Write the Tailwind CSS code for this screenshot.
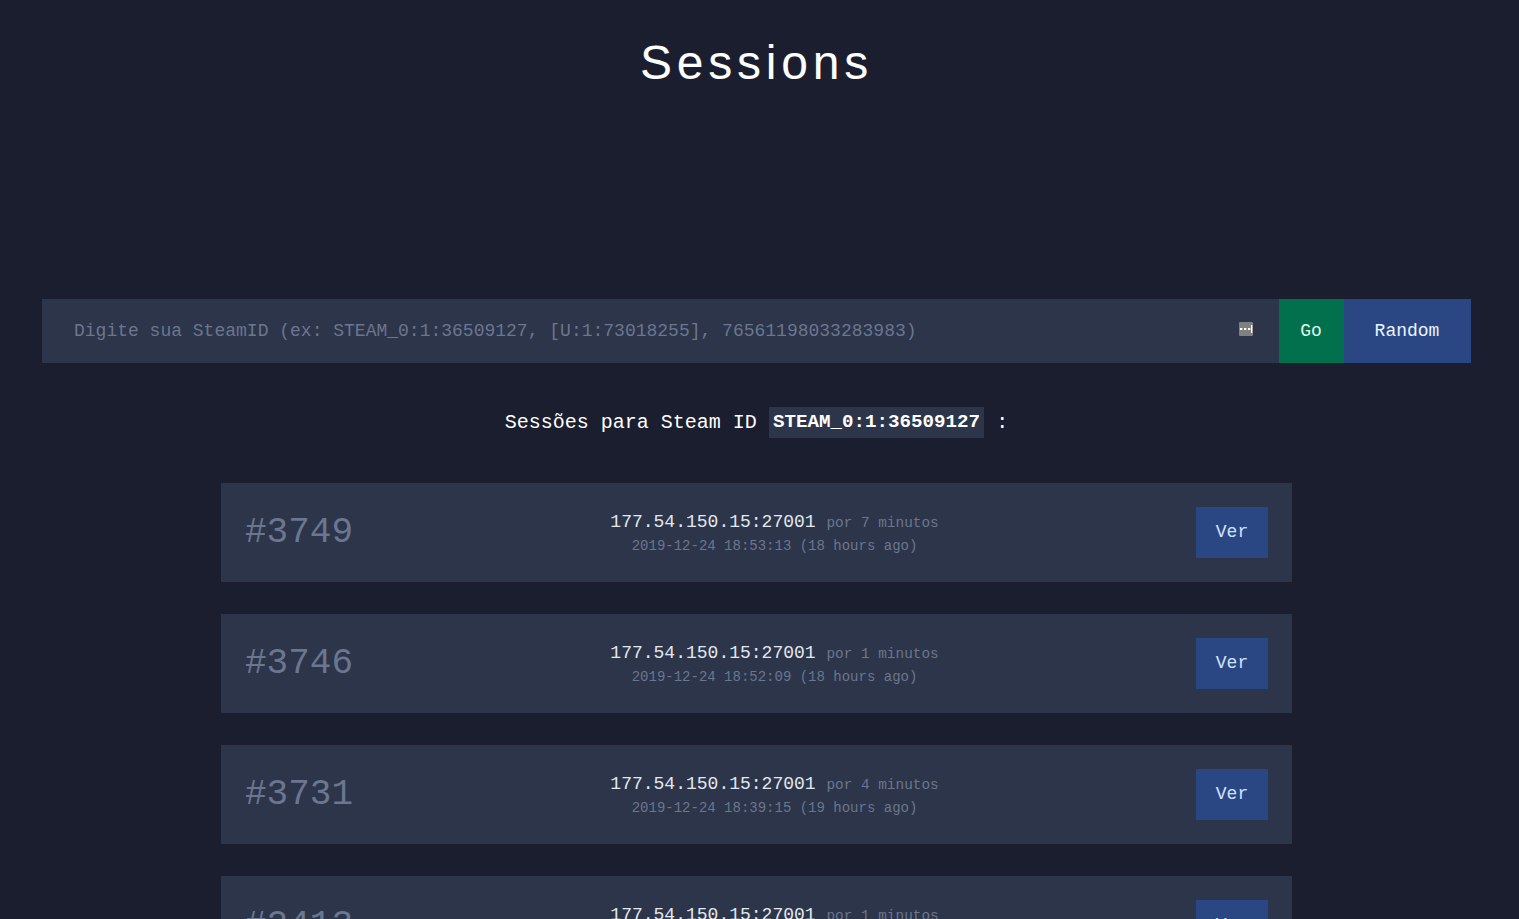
<!DOCTYPE html>
<html lang="pt">
<head>
    <meta charset="UTF-8">
    <meta name="viewport" content="width=device-width, initial-scale=1.0">
    <title>Sessions</title>
    <script src="https://cdn.jsdelivr.net/npm/@tailwindcss/browser@4"></script>
</head>

<body class="bg-[#1a1e2e] text-white font-['Liberation_Mono',monospace] h-screen overflow-hidden">

    <div class="ml-[42px] w-[1429px]">

        <!-- Title -->
        <h1 class="font-['Liberation_Sans',sans-serif] text-[48px] leading-[56px] tracking-[4.8px] text-center pt-[35px] h-[299px]">Sessions</h1>

        <!-- Search -->
        <form class="flex h-16">
            <div class="flex-1 flex items-center justify-between bg-[#2c3549] pl-8 pr-[26px]">
                <span class="text-[18px] text-[#6b7690]">Digite sua SteamID (ex: STEAM_0:1:36509127, [U:1:73018255], 76561198033283983)</span>
                <svg class="w-3.5 h-3.5 -mt-1" viewBox="0 0 14 14">
                    <rect width="14" height="14" rx="1" fill="#808080"/>
                    <rect x="1" y="6" width="2.3" height="2" fill="#fff"/>
                    <rect x="5" y="6" width="2.3" height="2" fill="#fff"/>
                    <rect x="9" y="6" width="2.3" height="2" fill="#fff"/>
                    <rect x="12" y="3" width="1.3" height="8" fill="#fff"/>
                </svg>
            </div>
            <button type="button" class="w-[65px] bg-[#03704d] text-[#def7ec] text-[18px] -indent-px">Go</button>
            <button type="button" class="w-[127px] bg-[#2a4784] text-[#ebf5ff] text-[18px] -indent-px">Random</button>
        </form>

        <!-- Steam ID -->
        <p class="text-center text-[20px] leading-[31px] mt-11 mb-[45px]">Sessões para Steam ID <strong class="bg-[#2c3549] text-[19.2px] px-1 inline-block align-[1px]">STEAM_0:1:36509127</strong> :</p>

        <!-- Sessions -->
        <div class="mx-[179px] flex flex-col gap-8">

            <div class="h-[99px] bg-[#2c3549] px-6 flex items-center justify-between">
                <span class="text-[36px] text-[#6b7690]">#3749</span>
                <div class="text-center">
                    <div class="text-[18px] leading-[26px] text-[#e2e8f0]">177.54.150.15:27001 <span class="text-[14.4px] text-[#6b7690]">por 7 minutos</span></div>
                    <div class="text-[14px] leading-[20px] text-[#6b7690]">2019-12-24 18:53:13 (18 hours ago)</div>
                </div>
                <button type="button" class="w-[72px] h-[51px] bg-[#2a4784] text-[#cfe3ff] text-[18px]">Ver</button>
            </div>

            <div class="h-[99px] bg-[#2c3549] px-6 flex items-center justify-between">
                <span class="text-[36px] text-[#6b7690]">#3746</span>
                <div class="text-center">
                    <div class="text-[18px] leading-[26px] text-[#e2e8f0]">177.54.150.15:27001 <span class="text-[14.4px] text-[#6b7690]">por 1 minutos</span></div>
                    <div class="text-[14px] leading-[20px] text-[#6b7690]">2019-12-24 18:52:09 (18 hours ago)</div>
                </div>
                <button type="button" class="w-[72px] h-[51px] bg-[#2a4784] text-[#cfe3ff] text-[18px]">Ver</button>
            </div>

            <div class="h-[99px] bg-[#2c3549] px-6 flex items-center justify-between">
                <span class="text-[36px] text-[#6b7690]">#3731</span>
                <div class="text-center">
                    <div class="text-[18px] leading-[26px] text-[#e2e8f0]">177.54.150.15:27001 <span class="text-[14.4px] text-[#6b7690]">por 4 minutos</span></div>
                    <div class="text-[14px] leading-[20px] text-[#6b7690]">2019-12-24 18:39:15 (19 hours ago)</div>
                </div>
                <button type="button" class="w-[72px] h-[51px] bg-[#2a4784] text-[#cfe3ff] text-[18px]">Ver</button>
            </div>

            <div class="h-[99px] bg-[#2c3549] px-6 flex items-center justify-between">
                <span class="text-[36px] text-[#6b7690]">#2413</span>
                <div class="text-center">
                    <div class="text-[18px] leading-[26px] text-[#e2e8f0]">177.54.150.15:27001 <span class="text-[14.4px] text-[#6b7690]">por 1 minutos</span></div>
                    <div class="text-[14px] leading-[20px] text-[#6b7690]">2019-12-24 15:20:41 (21 hours ago)</div>
                </div>
                <button type="button" class="w-[72px] h-[51px] bg-[#2a4784] text-[#cfe3ff] text-[18px]">Ver</button>
            </div>

        </div>
    </div>

</body>
</html>
